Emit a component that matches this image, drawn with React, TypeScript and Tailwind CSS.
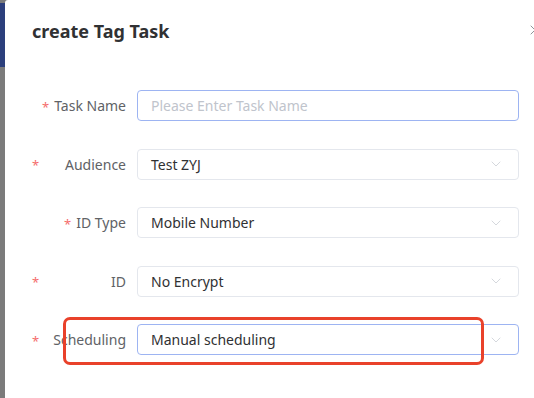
import { ChevronDown, X } from 'lucide-react';

type Row = {
  label: string;
  value?: string;
  placeholder?: string;
  select?: boolean;
  starFar?: boolean;
  focused?: boolean;
};

const rows: Row[] = [
  { label: 'Task Name', placeholder: 'Please Enter Task Name', focused: true },
  { label: 'Audience', value: 'Test ZYJ', select: true, starFar: true },
  { label: 'ID Type', value: 'Mobile Number', select: true },
  { label: 'ID', value: 'No Encrypt', select: true, starFar: true },
  { label: 'Scheduling', value: 'Manual scheduling', select: true, starFar: true, focused: true },
];

const FormRow = ({ row }: { row: Row }) => {
  return (
    <div className="flex items-center h-[31px]">
      <div
        className={
          row.starFar
            ? 'w-[94px] flex items-center justify-between text-[14px] text-[#606266]'
            : 'w-[94px] flex items-center justify-end text-[14px] text-[#606266]'
        }
      >
        <span className="relative top-[2px] text-[#f56c6c] mr-[5px] text-[13px]">*</span>
        <span>{row.label}</span>
      </div>
      <div
        className={
          row.focused
            ? 'ml-[11px] w-[382px] h-[31px] flex items-center justify-between rounded-[4px] border border-[#9db4f2] pl-[13px] pr-[14px]'
            : 'ml-[11px] w-[382px] h-[31px] flex items-center justify-between rounded-[4px] border border-[#e4e7ed] pl-[13px] pr-[14px]'
        }
      >
        {row.value ? (
          <span className="text-[14px] text-[#303133]">{row.value}</span>
        ) : (
          <span className="text-[14px] text-[#c0c4cc]">{row.placeholder}</span>
        )}
        {row.select && <ChevronDown size={16} strokeWidth={1} className="text-[#c0c4cc]" />}
      </div>
    </div>
  );
};

const App = () => {
  return (
    <div
      className="w-[534px] h-[398px] flex overflow-hidden bg-[#7b7b7b]"
      style={{ fontFamily: '"Noto Sans", "Liberation Sans", sans-serif' }}
    >
      <div className="w-[5px] flex flex-col">
        <div className="h-[3px] bg-[#7b7b7b]" />
        <div className="h-[64px] bg-[#2c3f7c]" />
        <div className="flex-1 bg-[#7b7b7b]" />
      </div>
      <div className="relative flex-1 bg-white rounded-tl-[3px] pl-[27px] overflow-hidden">
        <div className="pt-[18px] h-[90px]">
          <div className="text-[18px] font-bold text-[#303133] leading-[26px]">create Tag Task</div>
        </div>
        <X size={16} strokeWidth={1.5} className="absolute left-[522px] top-[22px] text-[#909399]" />
        <div className="flex flex-col gap-[27.5px]">
          {rows.map((row) => (
            <FormRow key={row.label} row={row} />
          ))}
        </div>
        <div className="absolute left-[58px] top-[317px] w-[421px] h-[48px] rounded-[7px] border-[3px] border-[#e9412a]" />
      </div>
    </div>
  );
};

export default App;
